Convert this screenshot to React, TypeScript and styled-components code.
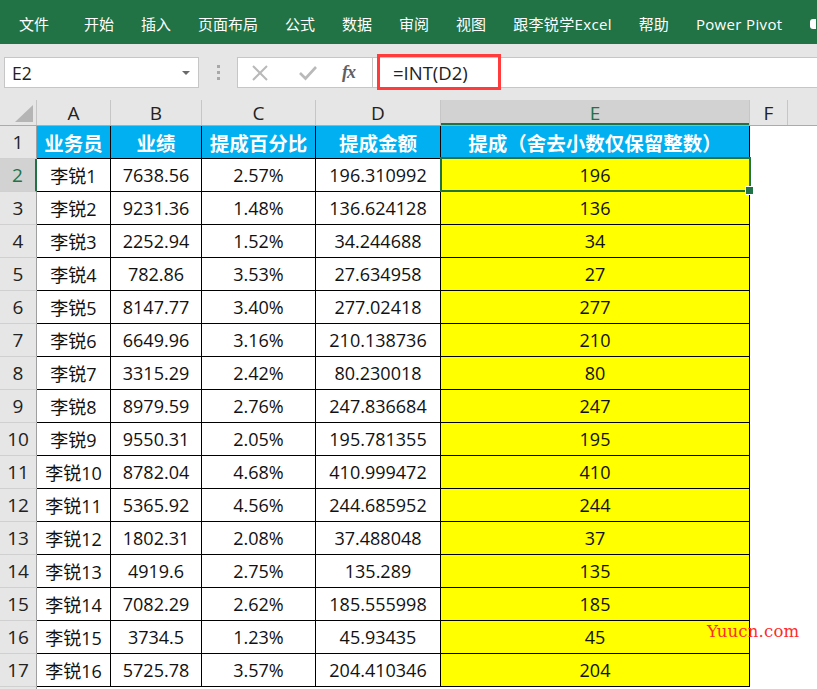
import React from 'react';
import styled, { createGlobalStyle, css } from 'styled-components';

const GlobalStyle = createGlobalStyle`
  html, body {
    margin: 0;
    padding: 0;
    background: #ffffff;
    overflow: hidden;
  }
  body {
    font-family: 'Open Sans', 'Noto Sans CJK SC', sans-serif;
  }
  * { box-sizing: border-box; }
`;

const GREEN = '#217346';
const COLS = [37, 74, 91, 114, 125, 309, 38, 40];
const LETTERS = ['A', 'B', 'C', 'D', 'E', 'F', ''];

const rows: string[][] = [
  ['李锐1', '7638.56', '2.57%', '196.310992', '196'],
  ['李锐2', '9231.36', '1.48%', '136.624128', '136'],
  ['李锐3', '2252.94', '1.52%', '34.244688', '34'],
  ['李锐4', '782.86', '3.53%', '27.634958', '27'],
  ['李锐5', '8147.77', '3.40%', '277.02418', '277'],
  ['李锐6', '6649.96', '3.16%', '210.138736', '210'],
  ['李锐7', '3315.29', '2.42%', '80.230018', '80'],
  ['李锐8', '8979.59', '2.76%', '247.836684', '247'],
  ['李锐9', '9550.31', '2.05%', '195.781355', '195'],
  ['李锐10', '8782.04', '4.68%', '410.999472', '410'],
  ['李锐11', '5365.92', '4.56%', '244.685952', '244'],
  ['李锐12', '1802.31', '2.08%', '37.488048', '37'],
  ['李锐13', '4919.6', '2.75%', '135.289', '135'],
  ['李锐14', '7082.29', '2.62%', '185.555998', '185'],
  ['李锐15', '3734.5', '1.23%', '45.93435', '45'],
  ['李锐16', '5725.78', '3.57%', '204.410346', '204'],
];

const headers = ['业务员', '业绩', '提成百分比', '提成金额', '提成（舍去小数仅保留整数）'];

const tabs = ['文件', '开始', '插入', '页面布局', '公式', '数据', '审阅', '视图', '跟李锐学Excel', '帮助', 'Power Pivot'];

/* ribbon */
const Ribbon = styled.div`
  height: 44px;
  background: ${GREEN};
  display: flex;
  align-items: center;
  padding: 3px 0 0 19px;
  gap: 27px;
  white-space: nowrap;
  overflow: hidden;
`;

const Tab = styled.span<{ $first?: boolean; $latin?: boolean }>`
  color: #ffffff;
  font-size: 15px;
  ${p => p.$latin && css`letter-spacing: 0.35px;`}
  ${p => p.$first && css`margin-right: 8px;`}
`;

const BulbStub = styled.span`
  width: 6px;
  height: 10px;
  border-radius: 3px 0 0 3px;
  background: #ffffff;
  flex: none;
`;

/* formula bar */
const FormulaArea = styled.div`
  height: 56px;
  background: #e6e6e6;
  display: flex;
  align-items: flex-start;
  padding: 13px 0 0 4px;
`;

const NameBox = styled.div`
  width: 195px;
  height: 31px;
  background: #fff;
  border: 1px solid #c6c6c6;
  display: flex;
  align-items: center;
  justify-content: space-between;
  padding: 0 8px 0 7px;
  font-size: 17.5px;
  color: #222;
`;

const Caret = styled.span`
  width: 0;
  height: 0;
  border-left: 4px solid transparent;
  border-right: 4px solid transparent;
  border-top: 4px solid #6a6a6a;
`;

const Grip = styled.div`
  width: 38px;
  height: 31px;
  display: flex;
  flex-direction: column;
  align-items: center;
  justify-content: center;
  gap: 3px;
`;

const GripDot = styled.span`
  width: 3px;
  height: 3px;
  background: #a8a8a8;
`;

const ButtonBox = styled.div`
  width: 136px;
  height: 31px;
  background: #fff;
  border: 1px solid #c6c6c6;
  display: flex;
  align-items: center;
  padding-left: 13px;
`;

const IconSlot = styled.span<{ $w: number }>`
  width: ${p => p.$w}px;
  display: flex;
  align-items: center;
`;

const Fx = styled.span`
  font-family: 'Liberation Serif', 'DejaVu Serif', serif;
  font-style: italic;
  font-weight: bold;
  font-size: 18px;
  color: #606060;
  letter-spacing: -1px;
`;

const FormulaInput = styled.div`
  flex: 1;
  height: 31px;
  background: #fff;
  border-top: 1px solid #c6c6c6;
  border-bottom: 1px solid #c6c6c6;
  position: relative;
  display: flex;
  align-items: center;
  padding-left: 20px;
  font-size: 18.5px;
  color: #222;
`;

const RedMark = styled.span`
  position: absolute;
  left: 4px;
  top: -4px;
  width: 124px;
  height: 36px;
  border: 3px solid #ff3b3b;
`;

/* sheet */
const Sheet = styled.div`
  position: relative;
`;

const HeadRow = styled.div`
  display: flex;
  height: 26px;
  background: #e6e6e6;
  border-bottom: 1px solid #ababab;
`;

const Corner = styled.div`
  width: ${COLS[0]}px;
  flex: none;
  border-right: 1px solid #c6c6c6;
  display: flex;
  align-items: flex-end;
  justify-content: flex-end;
  padding: 0 3px 3px 0;
`;

const ColHead = styled.div<{ $w: number; $active?: boolean }>`
  width: ${p => p.$w}px;
  flex: none;
  border-right: 1px solid #c6c6c6;
  display: flex;
  align-items: center;
  justify-content: center;
  font-size: 19px;
  color: #222;
  ${p => p.$active && css`
    background: #d2d2d2;
    color: ${GREEN};
    box-shadow: inset 0 -2px 0 ${GREEN};
  `}
`;

const Row = styled.div`
  display: flex;
  height: 33px;
`;

const RowHead = styled.div<{ $active?: boolean }>`
  width: ${COLS[0]}px;
  flex: none;
  background: #e6e6e6;
  border-right: 1px solid #9f9f9f;
  border-bottom: 1px solid #d0d0d0;
  display: flex;
  align-items: center;
  justify-content: center;
  font-size: 19px;
  color: #222;
  ${p => p.$active && css`
    background: #d2d2d2;
    color: ${GREEN};
    border-right: 2px solid ${GREEN};
  `}
`;

const Cell = styled.div<{ $w: number; $kind: 'head' | 'data' | 'result'; $selected?: boolean }>`
  width: ${p => p.$w}px;
  flex: none;
  display: flex;
  align-items: center;
  justify-content: center;
  white-space: nowrap;
  position: relative;
  font-size: 18px;
  color: #111;
  border-right: 1px solid #000;
  border-bottom: 1px solid #000;
  ${p => p.$kind === 'head' && css`
    background: #00b0f0;
    color: #fff;
    font-weight: bold;
    font-size: 19.5px;
  `}
  ${p => p.$kind === 'result' && css`
    background: #ffff00;
  `}
  ${p => p.$selected && css`
    &::after {
      content: '';
      position: absolute;
      left: -1px;
      top: -2px;
      right: -2px;
      bottom: -1px;
      border: 2px solid ${GREEN};
    }
    &::before {
      content: '';
      position: absolute;
      right: -5px;
      bottom: -4px;
      width: 7px;
      height: 7px;
      background: ${GREEN};
      border: 1px solid #fff;
      z-index: 2;
    }
  `}
`;

const Filler = styled.div`
  flex: 1;
`;

const Watermark = styled.div`
  position: absolute;
  left: 707px;
  top: 522px;
  font-family: 'DejaVu Serif', 'Liberation Serif', serif;
  font-size: 16.5px;
  color: #ff2b2b;
  letter-spacing: 0.2px;
`;

const CrossIcon = () => (
  <svg width="18" height="18" viewBox="0 0 18 18">
    <path d="M2 2 L16 16 M16 2 L2 16" stroke="#b9b9b9" strokeWidth="2" fill="none" />
  </svg>
);

const CheckIcon = () => (
  <svg width="20" height="18" viewBox="0 0 20 18">
    <path d="M2 9 L7.5 14.5 L18 3" stroke="#b9b9b9" strokeWidth="2.6" fill="none" />
  </svg>
);

const SelectAll = () => (
  <svg width="18" height="17" viewBox="0 0 18 17">
    <polygon points="18,0 18,17 0,17" fill="#b5b5b5" />
  </svg>
);

export default function App() {
  return (
    <>
      <GlobalStyle />
      <Ribbon>
        {tabs.map((t, i) => (
          <Tab key={t} $first={i === 0} $latin={/[A-Za-z]/.test(t)}>{t}</Tab>
        ))}
        <BulbStub />
      </Ribbon>

      <FormulaArea>
        <NameBox>
          <span>E2</span>
          <Caret />
        </NameBox>
        <Grip>
          <GripDot />
          <GripDot />
          <GripDot />
        </Grip>
        <ButtonBox>
          <IconSlot $w={47}><CrossIcon /></IconSlot>
          <IconSlot $w={44}><CheckIcon /></IconSlot>
          <IconSlot $w={30}><Fx>fx</Fx></IconSlot>
        </ButtonBox>
        <FormulaInput>
          <RedMark />
          =INT(D2)
        </FormulaInput>
      </FormulaArea>

      <Sheet>
        <HeadRow>
          <Corner><SelectAll /></Corner>
          {LETTERS.map((l, i) => (
            <ColHead key={i} $w={COLS[i + 1]} $active={l === 'E'}>{l}</ColHead>
          ))}
          <Filler />
        </HeadRow>

        <Row>
          <RowHead>1</RowHead>
          {headers.map((h, i) => (
            <Cell key={i} $w={COLS[i + 1]} $kind="head">{h}</Cell>
          ))}
          <Filler />
        </Row>

        {rows.map((r, ri) => (
          <Row key={ri}>
            <RowHead $active={ri === 0}>{ri + 2}</RowHead>
            {r.map((v, ci) => (
              <Cell
                key={ci}
                $w={COLS[ci + 1]}
                $kind={ci === 4 ? 'result' : 'data'}
                $selected={ri === 0 && ci === 4}
              >
                {v}
              </Cell>
            ))}
            <Filler />
          </Row>
        ))}
        <Row>
          <RowHead />
          <Filler />
        </Row>

        <Watermark>Yuucn.com</Watermark>
      </Sheet>
    </>
  );
}
